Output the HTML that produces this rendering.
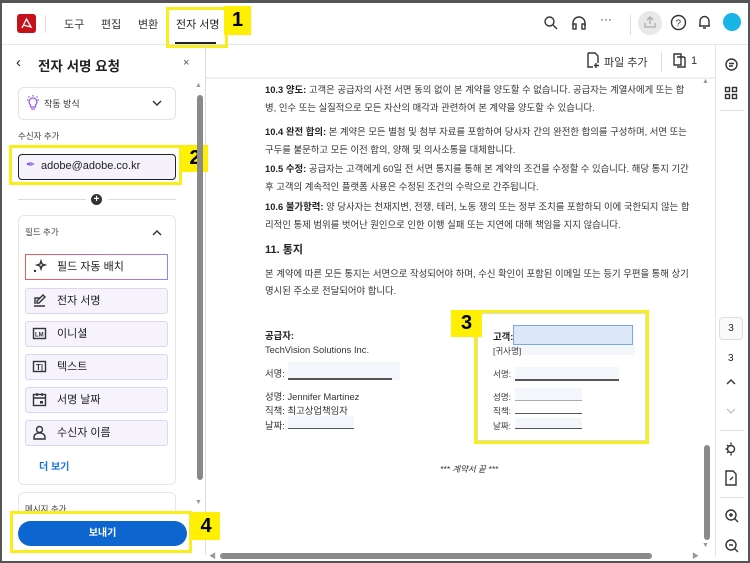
<!DOCTYPE html>
<html><head><meta charset="utf-8"><style>
*{box-sizing:border-box;margin:0;padding:0}
body{width:750px;height:563px;overflow:hidden;background:#fff;font-family:"Liberation Sans","Noto Sans CJK KR",sans-serif;color:#222;position:relative}
.a{position:absolute}
.frame{left:0;top:0;width:750px;height:563px;border:2px solid #555;border-top:3px solid #555}
.t{font-size:11px;white-space:nowrap}
.doc{font-size:9.4px;color:#333;white-space:nowrap;left:265px}
.doc b{color:#222}
.fld{left:25px;width:143px;height:26px;border:1px solid #ddd6f0;background:#f6f3fd;border-radius:3px;font-size:11px;padding:0 0 0 31px;line-height:24px;color:#222}
.yl{background:#ffef00;font-weight:bold;font-size:20px;text-align:center;color:#000}
.yb{border:3px solid #f7ee1a}
.ico{stroke:#333;fill:none;stroke-width:1.4}
</style></head><body>
<!-- top bar -->
<div class="a" style="left:0;top:44px;width:750px;height:1px;background:#e6e6e6"></div>
<div class="a" style="left:17px;top:14px;width:19px;height:19px;background:#c4111a;border-radius:3px"></div>
<svg class="a" style="left:19px;top:16px" width="15" height="15"><path d="M3 12 L7.5 3 L12 11 L4 9" stroke="#fff" stroke-width="1.3" fill="none"/></svg>
<div class="a" style="left:45px;top:15px;width:1px;height:18px;background:#ddd"></div>
<div class="a t" style="left:64px;top:16px;font-size:11px;color:#333">도구</div>
<div class="a t" style="left:101px;top:16px;font-size:11px;color:#333">편집</div>
<div class="a t" style="left:138px;top:16px;font-size:11px;color:#333">변환</div>
<div class="a t" style="left:176px;top:16px;font-size:11px;color:#222">전자 서명</div>
<div class="a" style="left:175px;top:42px;width:41px;height:2px;background:#222"></div>
<div class="a yb" style="left:166px;top:7px;width:62px;height:41px"></div>
<div class="a yl" style="left:224px;top:6px;width:27px;height:29px;line-height:29px">1</div>
<svg class="a" style="left:543px;top:15px" width="16" height="16"><circle cx="6.5" cy="6.5" r="4.5" class="ico"/><path d="M10 10L14 14" class="ico"/></svg>
<svg class="a" style="left:571px;top:15px" width="16" height="16"><path d="M2 11V8a6 6 0 0 1 12 0v3" class="ico"/><rect x="2" y="9" width="3" height="5" class="ico"/><rect x="11" y="9" width="3" height="5" class="ico"/></svg>
<div class="a t" style="left:600px;top:12px;font-size:12px;color:#333">···</div>
<div class="a" style="left:630px;top:15px;width:1px;height:20px;background:#ddd"></div>
<div class="a" style="left:638px;top:11px;width:24px;height:24px;border-radius:50%;background:#e8e8e8"></div>
<svg class="a" style="left:643px;top:15px" width="14" height="14"><path d="M7 9V2M4 5l3-3 3 3M2 8v4h10V8" stroke="#aaa" fill="none" stroke-width="1.3"/></svg>
<svg class="a" style="left:670px;top:14px" width="17" height="17"><circle cx="8.5" cy="8.5" r="7" class="ico"/><text x="5.5" y="12.5" font-size="10" font-family="Liberation Sans" fill="#333">?</text></svg>
<svg class="a" style="left:697px;top:14px" width="15" height="16"><path d="M3 12V7a4.5 4.5 0 0 1 9 0v5H2h11M6 14h3" class="ico"/></svg>
<div class="a" style="left:723px;top:13px;width:18px;height:18px;border-radius:50%;background:#1ab4e6"></div>
<!-- left panel -->
<div class="a" style="left:205px;top:45px;width:1px;height:510px;background:#ddd"></div>
<div class="a t" style="left:16px;top:54px;font-size:15px">‹</div>
<div class="a t" style="left:38px;top:55px;font-size:13.5px;font-weight:bold">전자 서명 요청</div>
<div class="a t" style="left:183px;top:57px;font-size:11px;color:#555">×</div>
<div class="a" style="left:18px;top:87px;width:158px;height:33px;border:1px solid #e2e2e2;border-radius:6px"></div>
<svg class="a" style="left:26px;top:95px" width="14" height="16"><path d="M7 3a4 4 0 0 0-2.5 7v2h5v-2A4 4 0 0 0 7 3zM5 14h4M7 0v1.5M1 5h1.5M11.5 5H13M2.5 1.5l1 1M11.5 1.5l-1 1" stroke="#9b5de5" fill="none" stroke-width="1.3"/></svg>
<div class="a t" style="left:44px;top:97px;font-size:9px;color:#333">작동 방식</div>
<svg class="a" style="left:152px;top:100px" width="10" height="7"><path d="M1 1l4 4 4-4" class="ico"/></svg>
<div class="a t" style="left:18px;top:130px;font-size:8.5px;color:#444">수신자 추가</div>
<div class="a" style="left:18px;top:154px;width:158px;height:26px;border:1.5px solid #222;border-radius:4px;background:#f5f2fc"></div>
<div class="a t" style="left:26px;top:158px;font-size:11px;color:#8a5ee0">✒</div>
<div class="a t" style="left:41px;top:160px;font-size:11px;color:#222">adobe@adobe.co.kr</div>
<div class="a yb" style="left:9px;top:145px;width:173px;height:40px"></div>
<div class="a yl" style="left:182px;top:145px;width:26px;height:27px;line-height:27px">2</div>
<div class="a" style="left:18px;top:199px;width:68px;height:1px;background:#ddd"></div>
<div class="a" style="left:108px;top:199px;width:68px;height:1px;background:#ddd"></div>
<div class="a" style="left:91px;top:194px;width:11px;height:11px;border-radius:50%;background:#333;color:#fff;font-size:10px;line-height:11px;text-align:center;font-weight:bold">+</div>
<div class="a" style="left:18px;top:215px;width:158px;height:270px;border:1px solid #e6e6e6;border-radius:6px"></div>
<div class="a t" style="left:25px;top:226px;font-size:8.5px;color:#444">필드 추가</div>
<svg class="a" style="left:152px;top:229px" width="10" height="7"><path d="M1 6l4-4 4 4" class="ico"/></svg>
<div class="a fld" style="top:254px;background:#fff;border:1.5px solid;border-image:linear-gradient(90deg,#f05a5a,#9b7ff0) 1">필드 자동 배치</div>
<svg class="a" style="left:32px;top:259px" width="15" height="15"><path d="M9 2l1 3 3 1-3 1-1 3-1-3-3-1 3-1z" class="ico" stroke-width="1.1"/><circle cx="3" cy="12" r="1.2" fill="#333"/></svg>
<div class="a fld" style="top:288px">전자 서명</div>
<div class="a fld" style="top:321px">이니셜</div>
<div class="a fld" style="top:354px">텍스트</div>
<div class="a fld" style="top:387px">서명 날짜</div>
<div class="a fld" style="top:420px">수신자 이름</div>
<svg class="a" style="left:32px;top:293px" width="15" height="15"><path d="M2 13h11M3 11V5h5M11 2l2 2-6 6H5V8z" class="ico"/></svg>
<svg class="a" style="left:32px;top:327px" width="15" height="14"><rect x="1.5" y="1.5" width="12" height="10" class="ico"/><text x="3" y="9.5" font-size="6" font-family="Liberation Sans" font-weight="bold" fill="#333">LM</text></svg>
<svg class="a" style="left:32px;top:360px" width="15" height="14"><rect x="1.5" y="1.5" width="12" height="10" class="ico"/><text x="4" y="10" font-size="8" font-family="Liberation Sans" font-weight="bold" fill="#333">T|</text></svg>
<svg class="a" style="left:32px;top:392px" width="15" height="15"><rect x="1.5" y="2.5" width="12" height="11" class="ico"/><path d="M1.5 6h12M5 1v3M10 1v3" class="ico"/><rect x="8" y="9" width="3" height="2.5" fill="#333"/></svg>
<svg class="a" style="left:32px;top:425px" width="15" height="15"><circle cx="7.5" cy="4.5" r="3" class="ico"/><path d="M2 14v-2a4 3 0 0 1 11 0v2z" class="ico"/></svg>
<div class="a t" style="left:39px;top:458px;font-size:10px;color:#1473e6;font-weight:bold">더 보기</div>
<div class="a" style="left:18px;top:492px;width:158px;height:30px;border:1px solid #e6e6e6;border-radius:6px"></div>
<div class="a t" style="left:25px;top:503px;font-size:8.5px;color:#444">메시지 추가</div>
<div class="a" style="left:5px;top:512px;width:193px;height:44px;background:#fff"></div>
<div class="a" style="left:18px;top:521px;width:169px;height:25px;border-radius:13px;background:#0d66d0;color:#fff;font-size:10px;font-weight:bold;text-align:center;line-height:25px">보내기</div>
<div class="a yb" style="left:10px;top:511px;width:182px;height:42px"></div>
<div class="a yl" style="left:192px;top:512px;width:28px;height:28px;line-height:28px">4</div>
<!-- left scrollbar -->
<div class="a t" style="left:195px;top:82px;font-size:7px;color:#999">▲</div>
<div class="a" style="left:197px;top:95px;width:6px;height:385px;background:#8a8a8a;border-radius:3px"></div>
<div class="a t" style="left:195px;top:499px;font-size:7px;color:#999">▼</div>
<!-- doc toolbar -->
<svg class="a" style="left:586px;top:52px" width="14" height="16"><path d="M2 1h7l3 3v7M2 1v14h5M10 11v5M8 13.5h5" class="ico"/></svg>
<div class="a t" style="left:604px;top:54px;font-size:11px;color:#333">파일 추가</div>
<div class="a" style="left:661px;top:52px;width:1px;height:20px;background:#ddd"></div>
<svg class="a" style="left:672px;top:52px" width="15" height="16"><path d="M2 2h7v11H2zM5 5h7l1 1v9H5" class="ico"/></svg>
<div class="a t" style="left:691px;top:55px;font-size:11px;color:#333">1</div>
<div class="a" style="left:206px;top:77px;width:509px;height:2px;background:#f0f0f0"></div>
<!-- doc text -->
<div class="a doc" style="top:82px"><b>10.3 양도:</b> 고객은 공급자의 사전 서면 동의 없이 본 계약을 양도할 수 없습니다. 공급자는 계열사에게 또는 합</div>
<div class="a doc" style="top:100px">병, 인수 또는 실질적으로 모든 자산의 매각과 관련하여 본 계약을 양도할 수 있습니다.</div>
<div class="a doc" style="top:124px"><b>10.4 완전 합의:</b> 본 계약은 모든 별첨 및 첨부 자료를 포함하여 당사자 간의 완전한 합의를 구성하며, 서면 또는</div>
<div class="a doc" style="top:142px">구두를 불문하고 모든 이전 합의, 양해 및 의사소통을 대체합니다.</div>
<div class="a doc" style="top:161px"><b>10.5 수정:</b> 공급자는 고객에게 60일 전 서면 통지를 통해 본 계약의 조건을 수정할 수 있습니다. 해당 통지 기간</div>
<div class="a doc" style="top:179px">후 고객의 계속적인 플랫폼 사용은 수정된 조건의 수락으로 간주됩니다.</div>
<div class="a doc" style="top:199px"><b>10.6 불가항력:</b> 양 당사자는 천재지변, 전쟁, 테러, 노동 쟁의 또는 정부 조치를 포함하되 이에 국한되지 않는 합</div>
<div class="a doc" style="top:217px">리적인 통제 범위를 벗어난 원인으로 인한 이행 실패 또는 지연에 대해 책임을 지지 않습니다.</div>
<div class="a doc" style="top:241px;font-size:11px;font-weight:bold;color:#222">11. 통지</div>
<div class="a doc" style="top:266px">본 계약에 따른 모든 통지는 서면으로 작성되어야 하며, 수신 확인이 포함된 이메일 또는 등기 우편을 통해 상기</div>
<div class="a doc" style="top:283px">명시된 주소로 전달되어야 합니다.</div>
<div class="a doc" style="top:328px;font-weight:bold;color:#222">공급자:</div>
<div class="a doc" style="top:344px">TechVision Solutions Inc.</div>
<div class="a" style="left:288px;top:362px;width:112px;height:18px;background:#f3f6fb"></div>
<div class="a" style="left:288px;top:378px;width:104px;height:1.5px;background:#555"></div>
<div class="a doc" style="top:366px">서명:</div>
<div class="a doc" style="top:389px">성명: Jennifer Martinez</div>
<div class="a doc" style="top:403px">직책: 최고상업책임자</div>
<div class="a" style="left:288px;top:416px;width:66px;height:13px;background:#f3f6fb"></div>
<div class="a" style="left:288px;top:428px;width:66px;height:1px;background:#555"></div>
<div class="a doc" style="top:418px">날짜:</div>
<!-- box 3 -->
<div class="a yb" style="left:474px;top:310px;width:175px;height:134px"></div>
<div class="a" style="left:477px;top:313px;width:169px;height:128px;border:1px solid #ddd"></div>
<div class="a yl" style="left:451px;top:310px;width:31px;height:27px;line-height:27px">3</div>
<div class="a" style="left:513px;top:325px;width:120px;height:20px;background:#dce7f8;border:1px solid #7aa7ea"></div>
<div class="a" style="left:513px;top:345px;width:122px;height:10px;background:#f3f6fb"></div>
<div class="a doc" style="left:493px;top:329px;font-weight:bold;color:#222">고객:</div>
<div class="a doc" style="left:493px;top:345px;font-size:8.5px">[귀사명]</div>
<div class="a" style="left:515px;top:367px;width:104px;height:12px;background:#f3f6fb"></div>
<div class="a" style="left:515px;top:379px;width:104px;height:1.5px;background:#555"></div>
<div class="a doc" style="left:493px;top:368px;font-size:8.5px">서명:</div>
<div class="a" style="left:515px;top:388px;width:67px;height:12px;background:#f3f6fb"></div>
<div class="a" style="left:515px;top:400px;width:67px;height:1px;background:#aaa"></div>
<div class="a" style="left:515px;top:413px;width:67px;height:1px;background:#555"></div>
<div class="a" style="left:515px;top:418px;width:67px;height:10px;background:#f3f6fb"></div>
<div class="a" style="left:515px;top:428px;width:67px;height:1px;background:#555"></div>
<div class="a doc" style="left:493px;top:391px;font-size:8.5px">성명:</div>
<div class="a doc" style="left:493px;top:405px;font-size:8.5px">직책:</div>
<div class="a doc" style="left:493px;top:420px;font-size:8.5px">날짜:</div>
<div class="a doc" style="left:440px;top:463px;font-style:italic;font-size:8.5px">*** 계약서 끝 ***</div>
<!-- right doc scrollbar -->
<div class="a t" style="left:702px;top:78px;font-size:7px;color:#999">▲</div>
<div class="a" style="left:704px;top:445px;width:6px;height:95px;background:#8a8a8a;border-radius:3px"></div>
<div class="a t" style="left:702px;top:542px;font-size:7px;color:#999">▼</div>
<!-- bottom scrollbar -->
<div class="a" style="left:220px;top:553px;width:432px;height:6px;background:#8a8a8a;border-radius:3px"></div>
<div class="a t" style="left:209px;top:551px;font-size:7px;color:#999">◀</div>
<div class="a t" style="left:692px;top:551px;font-size:7px;color:#999">▶</div>
<!-- right rail -->
<div class="a" style="left:715px;top:45px;width:1px;height:512px;background:#e6e6e6"></div>
<svg class="a" style="left:724px;top:57px" width="15" height="15"><circle cx="7.5" cy="7.5" r="5.5" class="ico"/><path d="M5 6.5h5M5 9h4" class="ico"/></svg>
<svg class="a" style="left:724px;top:86px" width="14" height="14"><rect x="1.5" y="1.5" width="4" height="4" class="ico"/><rect x="8.5" y="1.5" width="4" height="4" class="ico"/><rect x="1.5" y="8.5" width="4" height="4" class="ico"/><rect x="8.5" y="8.5" width="4" height="4" class="ico"/></svg>
<div class="a" style="left:720px;top:110px;width:24px;height:1px;background:#ddd"></div>
<div class="a" style="left:719px;top:317px;width:24px;height:23px;border:1px solid #ddd;border-radius:4px;background:#fafafa;font-size:10px;text-align:center;line-height:21px">3</div>
<div class="a t" style="left:728px;top:353px;font-size:10px">3</div>
<svg class="a" style="left:726px;top:378px" width="10" height="7"><path d="M1 6l4-4 4 4" class="ico"/></svg>
<svg class="a" style="left:726px;top:408px" width="10" height="7"><path d="M1 1l4 4 4-4" stroke="#bbb" fill="none" stroke-width="1.2"/></svg>
<div class="a" style="left:720px;top:430px;width:24px;height:1px;background:#ddd"></div>
<svg class="a" style="left:724px;top:441px" width="16" height="16"><circle cx="7" cy="8" r="3.5" class="ico"/><path d="M7 1.5v2M1.5 8h2M3 4l1.3 1.3M3 12l1.3-1.3M7 12.5v2" class="ico"/></svg>
<svg class="a" style="left:724px;top:470px" width="15" height="17"><path d="M2 1h7l3 3v11H2z M6 10l3-3" class="ico"/></svg>
<div class="a" style="left:720px;top:497px;width:24px;height:1px;background:#ddd"></div>
<svg class="a" style="left:724px;top:508px" width="16" height="16"><circle cx="7" cy="7" r="5" class="ico"/><path d="M10.5 10.5L14 14M5 7h4M7 5v4" class="ico"/></svg>
<svg class="a" style="left:724px;top:538px" width="16" height="16"><circle cx="7" cy="7" r="5" class="ico"/><path d="M10.5 10.5L14 14M5 7h4" class="ico"/></svg>
<div class="a frame"></div>
</body></html>
